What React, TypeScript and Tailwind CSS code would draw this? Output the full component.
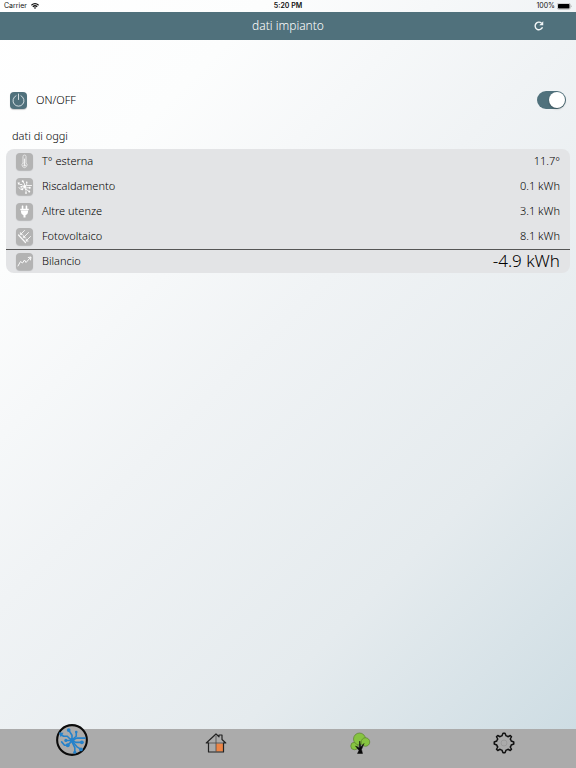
import { useState, type ReactNode } from 'react';

const stroke = { fill: 'none', strokeLinecap: 'round', strokeLinejoin: 'round' } as const;

function Wifi() {
  return (
    <svg viewBox="0 0 16 12" className="h-[6px] w-2" aria-hidden="true">
      <g fill="none" stroke="#111" strokeWidth="2.4">
        <path d="M0.8 4.6Q8 -2 15.2 4.6" />
        <path d="M3.6 7.6Q8 3.4 12.4 7.6" />
      </g>
      <path d="M5.6 9.3Q8 7.2 10.4 9.3L8 12Z" fill="#111" />
    </svg>
  );
}

function Battery() {
  return (
    <svg viewBox="0 0 30 14" className="h-[7px] w-[15px]" aria-hidden="true">
      <rect x="0.5" y="0.5" width="26" height="12" rx="3" fill="#fff" stroke="#888" />
      <rect x="2" y="2" width="23" height="9" rx="1.5" fill="#000" />
      <path d="M28 4.5Q30 6.5 28 8.5Z" fill="#777" />
    </svg>
  );
}

function Reload() {
  return (
    <svg viewBox="0 0 20 20" className="h-[10px] w-[10px]" aria-hidden="true">
      <path d="M17 12.5A7.6 7.6 0 1 1 15 4.2" fill="none" stroke="#f4f8f9" strokeWidth="2.8" />
      <path d="M18.5 0.5V8.5H10.5Z" fill="#f4f8f9" />
    </svg>
  );
}

function Circuit() {
  return (
    <>
      <g {...stroke} stroke="currentColor" strokeWidth="1.7">
        <path d="M17 16V12L13.5 6.5" />
        <path d="M16 17L12 13H8L5 11" />
        <path d="M18 16L21.5 13V8.5" />
        <path d="M18 17L22 15H31" />
        <path d="M18 18L21 19.5H27" />
        <path d="M18 19L22 24L26.5 27" />
        <path d="M17 19L20 25V30" />
        <path d="M16 19L12.5 22.5" />
        <path d="M15 17.5H10.5" />
        <path d="M12 22.5H9L6 19" />
      </g>
      <g fill="currentColor">
        <circle cx="13.5" cy="6.5" r="2" />
        <path d="M3 9L8 9.2L5 14Z" />
        <circle cx="21.5" cy="8.5" r="1.4" />
        <circle cx="27.5" cy="19.5" r="2" />
        <circle cx="26.5" cy="27" r="2" />
        <circle cx="20" cy="30" r="1.7" />
        <circle cx="12.5" cy="22.5" r="2.1" />
        <circle cx="10.5" cy="17.5" r="1.7" />
        <rect x="15" y="15" width="4.5" height="4.5" rx="1" />
      </g>
    </>
  );
}

function Tile({ color, children }: { color: string; children: ReactNode }) {
  return (
    <span className={`block size-[17px] shrink-0 rounded-[4px] text-white shadow-[0_1px_1px_rgba(0,0,0,0.2)] ${color}`}>
      <svg viewBox="0 0 34 34" className="size-full" aria-hidden="true">
        {children}
      </svg>
    </span>
  );
}

const thermometer = (
  <g {...stroke} stroke="#eee" strokeWidth="1.7">
    <path d="M14 20V7a3 3 0 0 1 6 0V20a5 5 0 1 1-6 0Z" />
    <path d="M17 12V23" strokeWidth="2.2" />
    <circle cx="17" cy="24.5" r="1.5" fill="#fff" />
  </g>
);

const plug = (
  <g fill="#fff">
    <rect x="11.5" y="5" width="3.2" height="8" rx="1" />
    <rect x="19.3" y="5" width="3.2" height="8" rx="1" />
    <rect x="8.5" y="11.5" width="17" height="3" rx="0.5" />
    <path d="M10 15H24V18Q24 23 19 24.5V29H15V24.5Q10 23 10 18Z" />
  </g>
);

const solar = (
  <g {...stroke} stroke="#fafafa" strokeWidth="1.8">
    <path d="M5 14L19 29" strokeWidth="2.4" />
    <path d="M17 5L10 12" />
    <path d="M25 9L16 18" />
    <path d="M29 17L21 25" />
    <path d="M8.5 9V13.5H13ZM14.5 15V19.5H19ZM20 22V26.5H24.5Z" fill="#fff" strokeWidth="0.8" />
  </g>
);

const chart = (
  <g {...stroke} stroke="#fafafa" strokeWidth="2">
    <path d="M4 26L9 17L13 20L17 14L20 19L29 9" />
    <path d="M24.5 9L30 8L29 14" />
  </g>
);

const rows = [
  { label: 'T° esterna', value: '11.7°', icon: thermometer },
  { label: 'Riscaldamento', value: '0.1 kWh', icon: <Circuit /> },
  { label: 'Altre utenze', value: '3.1 kWh', icon: plug },
  { label: 'Fotovoltaico', value: '8.1 kWh', icon: solar },
  { label: 'Bilancio', value: '-4.9 kWh', icon: chart },
];

function House() {
  return (
    <svg viewBox="0 0 44 44" className="size-[22px]" aria-hidden="true">
      <path d="M7 21L22 7L37 21V40H7Z" fill="#aaa" />
      <rect x="22" y="23" width="15" height="16" fill="#ed8546" />
      <g {...stroke} stroke="#222" strokeWidth="2.4">
        <path d="M7 22V40H37V22" />
        <path d="M7 22H2.5L22 4L28 9.5V6H34V15L41.5 22H37" />
      </g>
      <path d="M8 22H36M22 8V39" stroke="#444" strokeWidth="1.5" />
    </svg>
  );
}

function Tree() {
  return (
    <svg viewBox="0 0 44 44" className="size-[22px]" aria-hidden="true">
      <g fill="#86c440" stroke="#567c2c" strokeWidth="1.3">
        <circle cx="11" cy="28" r="7.5" />
        <circle cx="21" cy="14" r="12" />
        <circle cx="33" cy="20" r="8.5" />
      </g>
      <path d="M17 43L20 37L13 28L20.5 32L21.5 18L23.5 30L30 23L25 35L27 43Z" fill="#080808" stroke="#080808" />
    </svg>
  );
}

function Gear() {
  return (
    <svg viewBox="0 0 44 44" className="size-[22px]" aria-hidden="true">
      <path
        d="M18 7.5L20 2.5H24L26 7.5Q28.5 8 30 9.5L34.5 7L37 9.5L34.5 14Q36 16 36.5 18L41.5 20V24L36.5 26Q36 28.5 34.5 30L37 34.5L34.5 37L30 34.5Q28 36 26 36.5L24 41.5H20L18 36.5Q16 36 14 34.5L9.5 37L7 34.5L9.5 30Q8 28 7.5 26L2.5 24V20L7.5 18Q8 16 9.5 14L7 9.5L9.5 7L14 9.5Q16 8 18 7.5Z"
        {...stroke}
        stroke="#111"
        strokeWidth="3"
      />
      <circle cx="22" cy="22" r="6" fill="none" stroke="#939393" strokeWidth="1.3" />
    </svg>
  );
}

export default function App() {
  const [on, setOn] = useState(true);

  return (
    <div className="flex min-h-screen flex-col bg-[linear-gradient(135deg,#ffffff,#fcfdfd_20%,#f0f3f5_45%,#e5ebee_72%,#cbdbe2)] font-['Noto_Sans',sans-serif] text-black">
      <div className="grid h-3 grid-cols-3 items-center px-1 font-['Inter',sans-serif] text-[7px] leading-3 text-[#111]">
        <span className="flex items-center gap-1">
          Carrier
          <Wifi />
        </span>
        <span className="text-center font-semibold">5:20 PM</span>
        <span className="flex items-center justify-end gap-[2px]">
          100%
          <Battery />
        </span>
      </div>

      <header className="grid h-7 grid-cols-[1fr_auto_1fr] items-center bg-[#50717c] px-8">
        <h1 className="col-start-2 text-[12px] font-light text-white">dati impianto</h1>
        <button type="button" aria-label="Aggiorna" className="justify-self-end">
          <Reload />
        </button>
      </header>

      <main className="flex grow flex-col px-[6px] pt-12">
        <div className="flex h-6 items-center px-1">
          <Tile color="bg-[#50717c]">
            <g {...stroke} stroke="#e8eff1" strokeWidth="1.7">
              <path d="M12 7.5A11 11 0 1 0 22 7.5" />
              <path d="M17 4V15" />
            </g>
          </Tile>
          <label htmlFor="power" className="ml-[9px] grow text-[11px] font-light">
            ON/OFF
          </label>
          <input
            id="power"
            type="checkbox"
            role="switch"
            checked={on}
            onChange={(e) => setOn(e.target.checked)}
            className="flex h-[18px] w-[29px] appearance-none items-center rounded-full bg-[#b5bcbf] p-px before:size-4 before:rounded-full before:bg-white before:shadow-[0_1px_2px_rgba(0,0,0,0.3)] checked:justify-end checked:bg-[#50717c]"
          />
        </div>

        <h2 className="mt-3 px-[6px] text-[11px] leading-6 font-light">dati di oggi</h2>

        <table className="mt-px w-full border-collapse overflow-hidden rounded-lg bg-[#e3e4e6] text-[11px] font-light">
          <tbody>
            {rows.map(({ label, value, icon }) => (
              <tr key={label} className="h-[25px] last:h-6 last:border-t last:border-[#555]">
                <th scope="row" className="p-0 pl-[10px] text-left font-light">
                  <span className="flex items-center gap-[9px]">
                    <Tile color="bg-[#b3b3b3]">{icon}</Tile>
                    {label}
                  </span>
                </th>
                <td className={`p-0 pr-[10px] text-right ${label === 'Bilancio' ? 'text-[17px] leading-5' : ''}`}>
                  {value}
                </td>
              </tr>
            ))}
          </tbody>
        </table>
      </main>

      <nav className="grid h-[39px] grid-cols-4 justify-items-center bg-[#ababab]">
        <button type="button" aria-label="Impianto" className="-mt-[5px] size-8 self-start">
          <svg viewBox="0 0 34 34" className="size-full text-[#2582cb]" aria-hidden="true">
            <circle cx="17" cy="17" r="15.8" fill="#ababab" stroke="#0b0b0b" strokeWidth="2.2" />
            <Circuit />
          </svg>
        </button>
        <button type="button" aria-label="Casa" className="mt-[3px] self-start">
          <House />
        </button>
        <button type="button" aria-label="Ambiente" className="mt-[3px] self-start">
          <Tree />
        </button>
        <button type="button" aria-label="Impostazioni" className="mt-[3px] self-start">
          <Gear />
        </button>
      </nav>
    </div>
  );
}
